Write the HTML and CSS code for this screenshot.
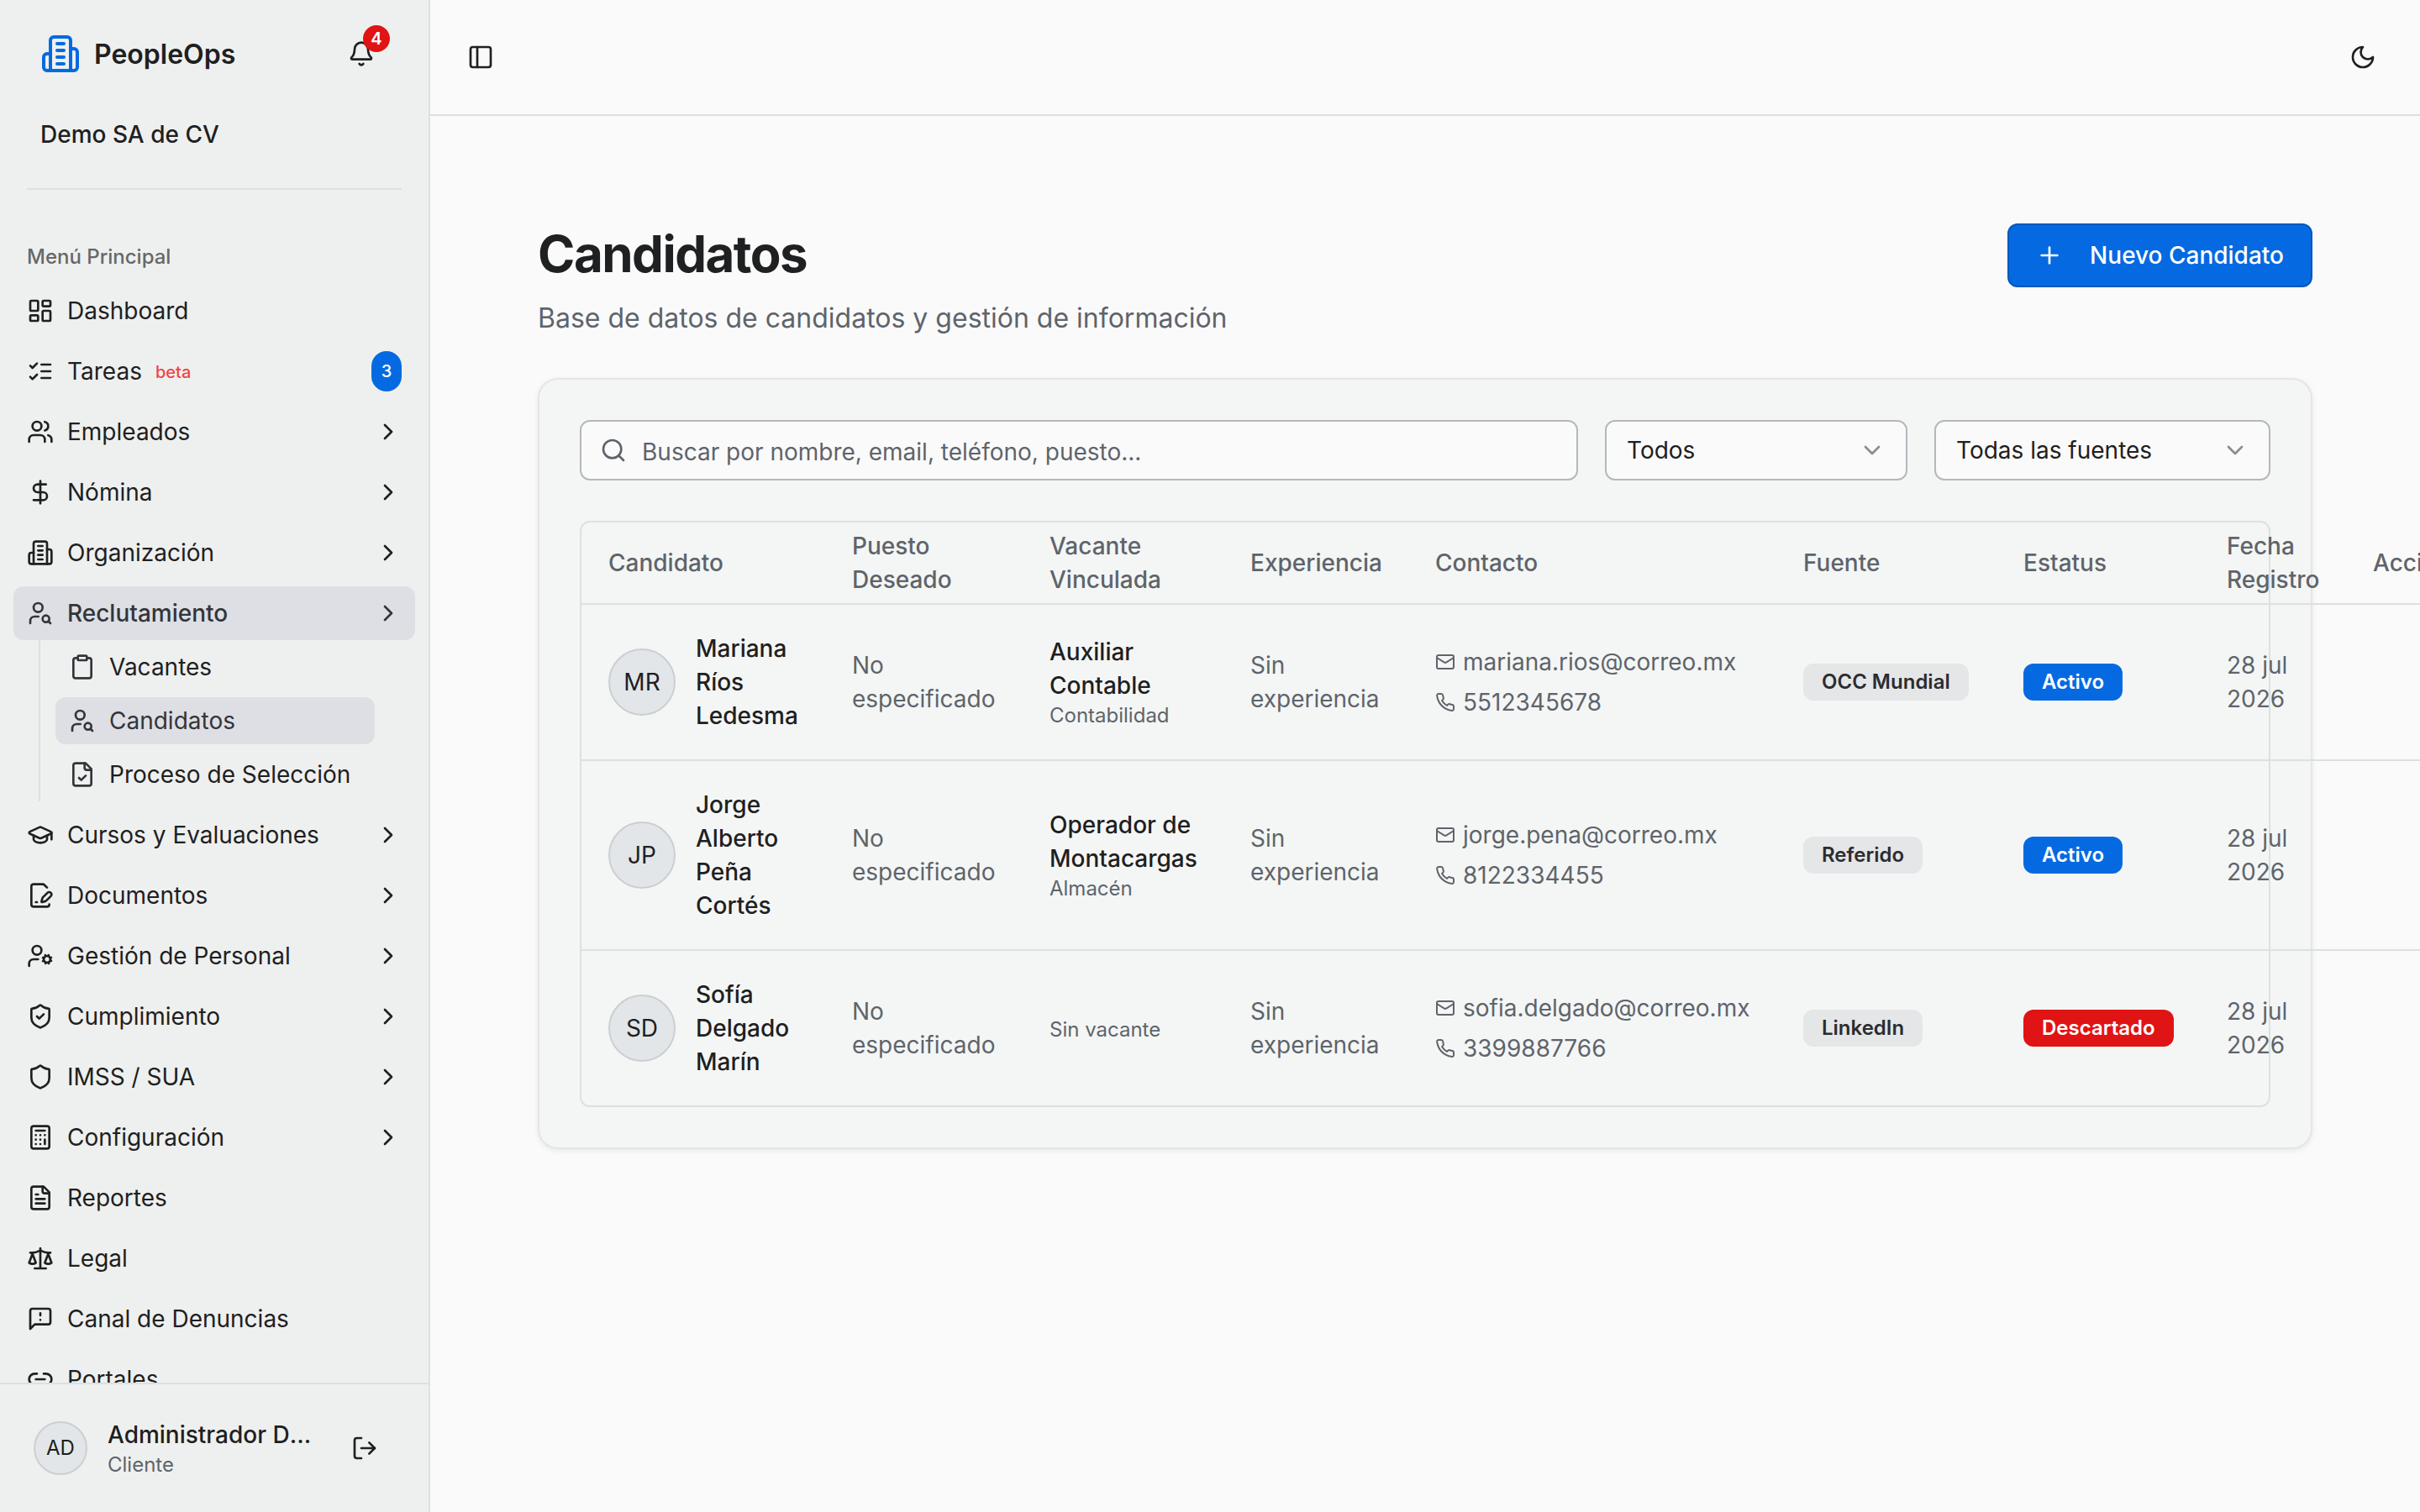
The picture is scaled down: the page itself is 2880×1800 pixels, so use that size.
FILE: index.html
```html
<!DOCTYPE html>
<html lang="es">
<head>
  <meta charset="UTF-8">
  <meta name="viewport" content="width=device-width, initial-scale=1.0">
  <title>PeopleOps - Candidatos</title>
  <link rel="stylesheet" href="styles.css">
</head>
<body>
  <!-- Iconos -->
  <svg class="sprite" xmlns="http://www.w3.org/2000/svg">
    <symbol id="building" viewBox="0 0 24 24"><path d="M6 22V4a2 2 0 0 1 2-2h8a2 2 0 0 1 2 2v18Z"/><path d="M6 12H4a2 2 0 0 0-2 2v6a2 2 0 0 0 2 2h2"/><path d="M18 9h2a2 2 0 0 1 2 2v9a2 2 0 0 1-2 2h-2"/><path d="M10 6h4M10 10h4M10 14h4M10 18h4"/></symbol>
    <symbol id="bell" viewBox="0 0 24 24"><path d="M10.268 21a2 2 0 0 0 3.464 0"/><path d="M3.262 15.326A1 1 0 0 0 4 17h16a1 1 0 0 0 .74-1.673C19.41 13.956 18 12.499 18 8A6 6 0 0 0 6 8c0 4.499-1.411 5.956-2.738 7.326"/></symbol>
    <symbol id="panel" viewBox="0 0 24 24"><rect width="18" height="18" x="3" y="3" rx="2"/><path d="M9 3v18"/></symbol>
    <symbol id="moon" viewBox="0 0 24 24"><path d="M12 3a6 6 0 0 0 9 9 9 9 0 1 1-9-9Z"/></symbol>
    <symbol id="dashboard" viewBox="0 0 24 24"><rect width="7" height="9" x="3" y="3" rx="1"/><rect width="7" height="5" x="14" y="3" rx="1"/><rect width="7" height="9" x="14" y="12" rx="1"/><rect width="7" height="5" x="3" y="16" rx="1"/></symbol>
    <symbol id="tasks" viewBox="0 0 24 24"><path d="m3 17 2 2 4-4"/><path d="m3 7 2 2 4-4"/><path d="M13 6h8M13 12h8M13 18h8"/></symbol>
    <symbol id="users" viewBox="0 0 24 24"><path d="M16 21v-2a4 4 0 0 0-4-4H6a4 4 0 0 0-4 4v2"/><circle cx="9" cy="7" r="4"/><path d="M22 21v-2a4 4 0 0 0-3-3.87"/><path d="M16 3.13a4 4 0 0 1 0 7.75"/></symbol>
    <symbol id="dollar" viewBox="0 0 24 24"><path d="M12 2v20"/><path d="M17 5H9.5a3.5 3.5 0 0 0 0 7h5a3.5 3.5 0 0 1 0 7H6"/></symbol>
    <symbol id="user-search" viewBox="0 0 24 24"><circle cx="10" cy="7" r="4"/><path d="M10.3 15H7a4 4 0 0 0-4 4v2"/><circle cx="17" cy="17" r="3"/><path d="m21 21-1.9-1.9"/></symbol>
    <symbol id="clipboard" viewBox="0 0 24 24"><rect width="8" height="4" x="8" y="2" rx="1"/><path d="M16 4h2a2 2 0 0 1 2 2v14a2 2 0 0 1-2 2H6a2 2 0 0 1-2-2V6a2 2 0 0 1 2-2h2"/></symbol>
    <symbol id="file-check" viewBox="0 0 24 24"><path d="M15 2H6a2 2 0 0 0-2 2v16a2 2 0 0 0 2 2h12a2 2 0 0 0 2-2V7Z"/><path d="M14 2v4a2 2 0 0 0 2 2h4"/><path d="m9 15 2 2 4-4"/></symbol>
    <symbol id="graduation" viewBox="0 0 24 24"><path d="M21.42 10.922a1 1 0 0 0-.019-1.838L12.83 5.18a2 2 0 0 0-1.66 0L2.6 9.08a1 1 0 0 0 0 1.832l8.57 3.908a2 2 0 0 0 1.66 0z"/><path d="M22 10v6"/><path d="M6 12.5V16a6 3 0 0 0 12 0v-3.5"/></symbol>
    <symbol id="file-pen" viewBox="0 0 24 24"><path d="m18 5-2.414-2.414A2 2 0 0 0 14.172 2H6a2 2 0 0 0-2 2v16a2 2 0 0 0 2 2h12a2 2 0 0 0 2-2"/><path d="M21.378 12.626a1 1 0 0 0-3.004-3.004l-4.01 4.012a2 2 0 0 0-.506.854l-.837 2.87a.5.5 0 0 0 .62.62l2.87-.837a2 2 0 0 0 .854-.506z"/><path d="M8 18h1"/></symbol>
    <symbol id="user-cog" viewBox="0 0 24 24"><circle cx="18" cy="15" r="3"/><circle cx="9" cy="7" r="4"/><path d="M10 15H6a4 4 0 0 0-4 4v2"/><path d="m21.7 16.4-.9-.3M15.2 13.9l-.9-.3M16.6 18.7l.3-.9M19.1 12.2l.3-.9M19.6 18.7l-.4-1M16.8 12.3l-.4-1M14.3 16.6l1-.4M20.7 13.8l1-.4"/></symbol>
    <symbol id="shield" viewBox="0 0 24 24"><path d="M20 13c0 5-3.5 7.5-7.66 8.95a1 1 0 0 1-.67-.01C7.5 20.5 4 18 4 13V6a1 1 0 0 1 1-1c2 0 4.5-1.2 6.24-2.72a1.17 1.17 0 0 1 1.52 0C14.51 3.81 17 5 19 5a1 1 0 0 1 1 1z"/></symbol>
    <symbol id="shield-check" viewBox="0 0 24 24"><path d="M20 13c0 5-3.5 7.5-7.66 8.95a1 1 0 0 1-.67-.01C7.5 20.5 4 18 4 13V6a1 1 0 0 1 1-1c2 0 4.5-1.2 6.24-2.72a1.17 1.17 0 0 1 1.52 0C14.51 3.81 17 5 19 5a1 1 0 0 1 1 1z"/><path d="m9 12 2 2 4-4"/></symbol>
    <symbol id="calculator" viewBox="0 0 24 24"><rect width="16" height="20" x="4" y="2" rx="2"/><path d="M8 6h8M16 14v4M16 10h.01M12 10h.01M8 10h.01M12 14h.01M8 14h.01M12 18h.01M8 18h.01"/></symbol>
    <symbol id="file-text" viewBox="0 0 24 24"><path d="M15 2H6a2 2 0 0 0-2 2v16a2 2 0 0 0 2 2h12a2 2 0 0 0 2-2V7Z"/><path d="M14 2v4a2 2 0 0 0 2 2h4"/><path d="M10 9H8M16 13H8M16 17H8"/></symbol>
    <symbol id="scale" viewBox="0 0 24 24"><path d="m16 16 3-8 3 8c-.87.65-1.92 1-3 1s-2.13-.35-3-1Z"/><path d="m2 16 3-8 3 8c-.87.65-1.92 1-3 1s-2.13-.35-3-1Z"/><path d="M7 21h10M12 3v18"/><path d="M3 7h2c2 0 5-1 7-2 2 1 5 2 7 2h2"/></symbol>
    <symbol id="message" viewBox="0 0 24 24"><path d="M21 15a2 2 0 0 1-2 2H7l-4 4V5a2 2 0 0 1 2-2h14a2 2 0 0 1 2 2z"/><path d="M12 7v2M12 13h.01"/></symbol>
    <symbol id="link" viewBox="0 0 24 24"><path d="M9 17H7A5 5 0 0 1 7 7h2"/><path d="M15 7h2a5 5 0 1 1 0 10h-2"/><path d="M8 12h8"/></symbol>
    <symbol id="logout" viewBox="0 0 24 24"><path d="M9 21H5a2 2 0 0 1-2-2V5a2 2 0 0 1 2-2h4"/><path d="m16 17 5-5-5-5"/><path d="M21 12H9"/></symbol>
    <symbol id="chevron-right" viewBox="0 0 24 24"><path d="m9 18 6-6-6-6"/></symbol>
    <symbol id="chevron-down" viewBox="0 0 24 24"><path d="m6 9 6 6 6-6"/></symbol>
    <symbol id="plus" viewBox="0 0 24 24"><path d="M5 12h14M12 5v14"/></symbol>
    <symbol id="search" viewBox="0 0 24 24"><circle cx="11" cy="11" r="8"/><path d="m21 21-4.3-4.3"/></symbol>
    <symbol id="mail" viewBox="0 0 24 24"><rect width="20" height="16" x="2" y="4" rx="2"/><path d="m22 7-8.97 5.7a1.94 1.94 0 0 1-2.06 0L2 7"/></symbol>
    <symbol id="phone" viewBox="0 0 24 24"><path d="M22 16.92v3a2 2 0 0 1-2.18 2 19.79 19.79 0 0 1-8.63-3.07 19.5 19.5 0 0 1-6-6 19.79 19.79 0 0 1-3.07-8.67A2 2 0 0 1 4.11 2h3a2 2 0 0 1 2 1.72 12.84 12.84 0 0 0 .7 2.81 2 2 0 0 1-.45 2.11L8.09 9.91a16 16 0 0 0 6 6l1.27-1.27a2 2 0 0 1 2.11-.45 12.84 12.84 0 0 0 2.81.7A2 2 0 0 1 22 16.92z"/></symbol>
  </svg>

  <div class="app">
    <aside class="sidebar">
      <div class="sidebar-header">
        <div class="brand">
          <svg class="icon brand-icon"><use href="#building"/></svg>
          <span class="brand-name">PeopleOps</span>
          <button class="bell-btn">
            <svg class="icon"><use href="#bell"/></svg>
            <span class="bell-count">4</span>
          </button>
        </div>
        <div class="company">Demo SA de CV</div>
      </div>

      <nav class="nav">
        <div class="nav-label">Menú Principal</div>
        <ul class="nav-list">
          <li><a class="nav-item"><svg class="icon"><use href="#dashboard"/></svg><span>Dashboard</span></a></li>
          <li><a class="nav-item"><svg class="icon"><use href="#tasks"/></svg><span>Tareas</span><span class="beta">beta</span><span class="nav-count">3</span></a></li>
          <li><a class="nav-item"><svg class="icon"><use href="#users"/></svg><span>Empleados</span><svg class="icon chevron"><use href="#chevron-right"/></svg></a></li>
          <li><a class="nav-item"><svg class="icon"><use href="#dollar"/></svg><span>Nómina</span><svg class="icon chevron"><use href="#chevron-right"/></svg></a></li>
          <li><a class="nav-item"><svg class="icon"><use href="#building"/></svg><span>Organización</span><svg class="icon chevron"><use href="#chevron-right"/></svg></a></li>
          <li>
            <a class="nav-item active"><svg class="icon"><use href="#user-search"/></svg><span>Reclutamiento</span><svg class="icon chevron"><use href="#chevron-right"/></svg></a>
            <ul class="subnav">
              <li><a class="subnav-item"><svg class="icon"><use href="#clipboard"/></svg><span>Vacantes</span></a></li>
              <li><a class="subnav-item active"><svg class="icon"><use href="#user-search"/></svg><span>Candidatos</span></a></li>
              <li><a class="subnav-item"><svg class="icon"><use href="#file-check"/></svg><span>Proceso de Selección</span></a></li>
            </ul>
          </li>
          <li><a class="nav-item"><svg class="icon"><use href="#graduation"/></svg><span>Cursos y Evaluaciones</span><svg class="icon chevron"><use href="#chevron-right"/></svg></a></li>
          <li><a class="nav-item"><svg class="icon"><use href="#file-pen"/></svg><span>Documentos</span><svg class="icon chevron"><use href="#chevron-right"/></svg></a></li>
          <li><a class="nav-item"><svg class="icon"><use href="#user-cog"/></svg><span>Gestión de Personal</span><svg class="icon chevron"><use href="#chevron-right"/></svg></a></li>
          <li><a class="nav-item"><svg class="icon"><use href="#shield-check"/></svg><span>Cumplimiento</span><svg class="icon chevron"><use href="#chevron-right"/></svg></a></li>
          <li><a class="nav-item"><svg class="icon"><use href="#shield"/></svg><span>IMSS / SUA</span><svg class="icon chevron"><use href="#chevron-right"/></svg></a></li>
          <li><a class="nav-item"><svg class="icon"><use href="#calculator"/></svg><span>Configuración</span><svg class="icon chevron"><use href="#chevron-right"/></svg></a></li>
          <li><a class="nav-item"><svg class="icon"><use href="#file-text"/></svg><span>Reportes</span></a></li>
          <li><a class="nav-item"><svg class="icon"><use href="#scale"/></svg><span>Legal</span></a></li>
          <li><a class="nav-item"><svg class="icon"><use href="#message"/></svg><span>Canal de Denuncias</span></a></li>
          <li><a class="nav-item"><svg class="icon"><use href="#link"/></svg><span>Portales</span></a></li>
        </ul>
      </nav>

      <div class="sidebar-footer">
        <div class="avatar avatar-sm">AD</div>
        <div class="user">
          <div class="user-name">Administrador Demo</div>
          <div class="user-role">Cliente</div>
        </div>
        <svg class="icon"><use href="#logout"/></svg>
      </div>
    </aside>

    <main class="main">
      <header class="topbar">
        <svg class="icon"><use href="#panel"/></svg>
        <svg class="icon"><use href="#moon"/></svg>
      </header>

      <section class="content">
        <div class="page-head">
          <div>
            <h1 class="page-title">Candidatos</h1>
            <p class="page-subtitle">Base de datos de candidatos y gestión de información</p>
          </div>
          <button class="btn-primary"><svg class="icon"><use href="#plus"/></svg><span>Nuevo Candidato</span></button>
        </div>

        <div class="card">
          <div class="filters">
            <div class="search-box">
              <svg class="icon"><use href="#search"/></svg>
              <span>Buscar por nombre, email, teléfono, puesto...</span>
            </div>
            <div class="select select-status"><span>Todos</span><svg class="icon"><use href="#chevron-down"/></svg></div>
            <div class="select select-source"><span>Todas las fuentes</span><svg class="icon"><use href="#chevron-down"/></svg></div>
          </div>

          <div class="table-wrap">
            <table class="table">
              <colgroup>
                <col class="col-name"><col class="col-job"><col class="col-vacancy"><col class="col-exp"><col class="col-contact"><col class="col-source"><col class="col-status"><col class="col-date"><col class="col-actions">
              </colgroup>
              <thead>
                <tr>
                  <th>Candidato</th>
                  <th>Puesto Deseado</th>
                  <th>Vacante Vinculada</th>
                  <th>Experiencia</th>
                  <th>Contacto</th>
                  <th>Fuente</th>
                  <th>Estatus</th>
                  <th>Fecha Registro</th>
                  <th>Acciones</th>
                </tr>
              </thead>
              <tbody>
                <tr>
                  <td><div class="person"><div class="avatar">MR</div><div class="person-name">Mariana Ríos Ledesma</div></div></td>
                  <td>No especificado</td>
                  <td><div class="vacancy">Auxiliar Contable</div><div class="area">Contabilidad</div></td>
                  <td>Sin experiencia</td>
                  <td>
                    <div class="contact">
                      <div class="contact-row"><svg class="icon icon-sm"><use href="#mail"/></svg>mariana.rios@correo.mx</div>
                      <div class="contact-row"><svg class="icon icon-sm"><use href="#phone"/></svg>5512345678</div>
                    </div>
                  </td>
                  <td><div class="badge">OCC Mundial</div></td>
                  <td><div class="badge badge-blue">Activo</div></td>
                  <td>28 jul 2026</td>
                  <td></td>
                </tr>
                <tr>
                  <td><div class="person"><div class="avatar">JP</div><div class="person-name">Jorge Alberto Peña Cortés</div></div></td>
                  <td>No especificado</td>
                  <td><div class="vacancy">Operador de Montacargas</div><div class="area">Almacén</div></td>
                  <td>Sin experiencia</td>
                  <td>
                    <div class="contact">
                      <div class="contact-row"><svg class="icon icon-sm"><use href="#mail"/></svg>jorge.pena@correo.mx</div>
                      <div class="contact-row"><svg class="icon icon-sm"><use href="#phone"/></svg>8122334455</div>
                    </div>
                  </td>
                  <td><div class="badge">Referido</div></td>
                  <td><div class="badge badge-blue">Activo</div></td>
                  <td>28 jul 2026</td>
                  <td></td>
                </tr>
                <tr>
                  <td><div class="person"><div class="avatar">SD</div><div class="person-name">Sofía Delgado Marín</div></div></td>
                  <td>No especificado</td>
                  <td><span class="no-vacancy">Sin vacante</span></td>
                  <td>Sin experiencia</td>
                  <td>
                    <div class="contact">
                      <div class="contact-row"><svg class="icon icon-sm"><use href="#mail"/></svg>sofia.delgado@correo.mx</div>
                      <div class="contact-row"><svg class="icon icon-sm"><use href="#phone"/></svg>3399887766</div>
                    </div>
                  </td>
                  <td><div class="badge">LinkedIn</div></td>
                  <td><div class="badge badge-red">Descartado</div></td>
                  <td>28 jul 2026</td>
                  <td></td>
                </tr>
              </tbody>
            </table>
          </div>
        </div>
      </section>
    </main>
  </div>
</body>
</html>
```
FILE: styles.css
```css
:root {
  --background: #fafafa;
  --foreground: #1e2021;
  --muted: #5e646b;
  --primary: #056ae1;
  --danger: #e01414;
  --sidebar: #eef0ef;
  --card: #f4f6f5;
  --border: #dee0df;
  --accent: #dedfe4;
  --accent-text: #33353a;
}

* {
  box-sizing: border-box;
}

body {
  margin: 0;
  height: 1800px;
  overflow: hidden;
  background: var(--background);
  color: var(--foreground);
  font-family: Inter, "Liberation Sans", sans-serif;
  font-size: 28px;
  line-height: 40px;
}

h1, p, ul {
  margin: 0;
  padding: 0;
}

ul {
  list-style: none;
}

button {
  font: inherit;
}

.sprite {
  display: none;
}

.icon {
  width: 32px;
  height: 32px;
  flex-shrink: 0;
  fill: none;
  stroke: currentColor;
  stroke-width: 2;
  stroke-linecap: round;
  stroke-linejoin: round;
}

.icon-sm {
  width: 24px;
  height: 24px;
}

.app {
  display: flex;
  height: 1800px;
}

/* Barra lateral */
.sidebar {
  width: 512px;
  flex-shrink: 0;
  display: flex;
  flex-direction: column;
  background: var(--sidebar);
  border-right: 2px solid var(--border);
}

.sidebar-header {
  height: 226px;
  flex-shrink: 0;
  margin: 0 32px;
  padding: 32px 16px 0;
  border-bottom: 2px solid var(--border);
}

.brand {
  display: flex;
  align-items: center;
  height: 64px;
}

.brand-icon {
  width: 48px;
  height: 48px;
  color: var(--primary);
}

.brand-name {
  margin-left: 16px;
  padding-top: 2px;
  font-size: 32px;
  font-weight: 600;
}

.bell-btn {
  position: relative;
  display: flex;
  margin-left: auto;
  margin-right: 16px;
  padding: 0;
  border: none;
  background: none;
  color: inherit;
}

.bell-count {
  position: absolute;
  top: -18px;
  right: -18px;
  width: 32px;
  height: 32px;
  border-radius: 50%;
  background: var(--danger);
  color: #fff;
  font-size: 20px;
  font-weight: 600;
  line-height: 33px;
  text-align: center;
}

.company {
  margin-top: 44px;
  font-weight: 500;
}

.nav {
  flex: 1;
  min-height: 0;
  overflow: hidden;
  padding: 48px 16px 0;
}

.nav-label {
  height: 64px;
  padding: 0 16px;
  font-size: 24px;
  font-weight: 500;
  line-height: 64px;
  color: #666868;
}

.nav-list {
  display: flex;
  flex-direction: column;
  gap: 8px;
}

.nav-item {
  display: flex;
  align-items: center;
  gap: 16px;
  height: 64px;
  padding: 0 16px;
  border-radius: 12px;
}

.nav-item.active {
  background: var(--accent);
  color: var(--accent-text);
  font-weight: 500;
}

.chevron {
  margin-left: auto;
}

.beta {
  padding-top: 2px;
  font-size: 20px;
  font-weight: 500;
  color: #ef4444;
}

.nav-count {
  width: 36px;
  height: 48px;
  margin-left: auto;
  border-radius: 18px;
  background: var(--primary);
  color: #fff;
  font-size: 20px;
  font-weight: 500;
  line-height: 49px;
  text-align: center;
}

.subnav {
  display: flex;
  flex-direction: column;
  gap: 8px;
  margin: 0 28px 0 30px;
  padding: 4px 20px 4px 18px;
  border-left: 2px solid var(--border);
}

.subnav-item {
  display: flex;
  align-items: center;
  gap: 16px;
  height: 56px;
  padding: 0 16px;
  border-radius: 12px;
  white-space: nowrap;
}

.subnav-item .icon {
  color: var(--accent-text);
}

.subnav-item.active {
  background: var(--accent);
  color: var(--accent-text);
}

.sidebar-footer {
  display: flex;
  align-items: center;
  height: 154px;
  flex-shrink: 0;
  padding: 0 60px 0 40px;
  border-top: 2px solid var(--border);
}

.avatar {
  display: flex;
  align-items: center;
  justify-content: center;
  width: 80px;
  height: 80px;
  flex-shrink: 0;
  border: 2px solid #cccfd2;
  border-radius: 50%;
  background: #e2e6e9;
  color: var(--foreground);
}

.avatar-sm {
  width: 64px;
  height: 64px;
  font-size: 24px;
}

.user {
  width: 250px;
  margin: 0 auto 0 24px;
}

.user-name {
  overflow: hidden;
  font-weight: 500;
  text-overflow: ellipsis;
  white-space: nowrap;
}

.user-role {
  font-size: 24px;
  line-height: 32px;
  color: var(--muted);
}

/* Contenido principal */
.main {
  flex: 1;
  min-width: 0;
}

.topbar {
  display: flex;
  align-items: center;
  justify-content: space-between;
  height: 138px;
  padding: 0 52px 0 44px;
  border-bottom: 2px solid var(--border);
}

.content {
  padding: 128px;
}

.page-head {
  display: flex;
  align-items: flex-start;
  justify-content: space-between;
  height: 184px;
}

.page-title {
  font-size: 60px;
  font-weight: 700;
  line-height: 72px;
  letter-spacing: -0.025em;
}

.page-subtitle {
  margin-top: 16px;
  font-size: 32px;
  line-height: 50px;
  color: var(--muted);
}

.btn-primary {
  display: flex;
  align-items: center;
  gap: 32px;
  height: 76px;
  padding: 0 32px;
  border: 2px solid #0558ba;
  border-radius: 12px;
  background: var(--primary);
  color: #fff;
  font-weight: 500;
  white-space: nowrap;
}

.card {
  padding: 48px;
  border: 2px solid #e4e6e5;
  border-radius: 24px;
  background: var(--card);
  box-shadow: 0 2px 6px rgba(0, 0, 0, 0.08);
}

.filters {
  display: flex;
  gap: 32px;
  margin-bottom: 48px;
}

.search-box,
.select {
  display: flex;
  align-items: center;
  height: 72px;
  border: 2px solid #b4b8bd;
  border-radius: 12px;
  background: var(--background);
}

.search-box {
  flex: 1;
  gap: 18px;
  padding: 0 22px;
  color: var(--muted);
}

.search-box span {
  padding-top: 3px;
}

.select {
  justify-content: space-between;
  padding: 0 24px;
}

.select .icon {
  opacity: 0.5;
}

.select-status {
  width: 360px;
}

.select-source {
  width: 400px;
}

/* La tabla es más ancha que la tarjeta */
.table-wrap {
  border: 2px solid var(--border);
  border-radius: 12px;
}

.table {
  width: 2408px;
  table-layout: fixed;
  border-collapse: separate;
  border-spacing: 0;
}

.col-name { width: 290px; }
.col-job { width: 235px; }
.col-vacancy { width: 239px; }
.col-exp { width: 220px; }
.col-contact { width: 438px; }
.col-source { width: 262px; }
.col-status { width: 242px; }
.col-date { width: 174px; }

.table th {
  padding: 8px 32px;
  border-bottom: 2px solid var(--border);
  color: var(--muted);
  font-weight: 500;
  text-align: left;
}

.table td {
  padding: 32px;
  border-bottom: 2px solid var(--border);
  color: var(--muted);
}

.table tr:last-child td {
  border-bottom: none;
}

.person {
  display: flex;
  align-items: center;
  gap: 24px;
}

.person-name,
.vacancy {
  color: var(--foreground);
  font-weight: 500;
}

.area {
  font-size: 24px;
  line-height: 32px;
}

.no-vacancy {
  font-size: 24px;
  line-height: 32px;
}

.contact {
  display: flex;
  flex-direction: column;
  gap: 8px;
}

.contact-row {
  display: flex;
  align-items: center;
  gap: 9px;
  white-space: nowrap;
}

.badge {
  width: fit-content;
  padding: 6px 22px;
  border-radius: 12px;
  background: #e5e6e8;
  color: #2b2d30;
  font-size: 24px;
  font-weight: 600;
  line-height: 32px;
  white-space: nowrap;
}

.badge-blue {
  background: var(--primary);
  color: #fff;
}

.badge-red {
  background: var(--danger);
  color: #fff;
}
```
